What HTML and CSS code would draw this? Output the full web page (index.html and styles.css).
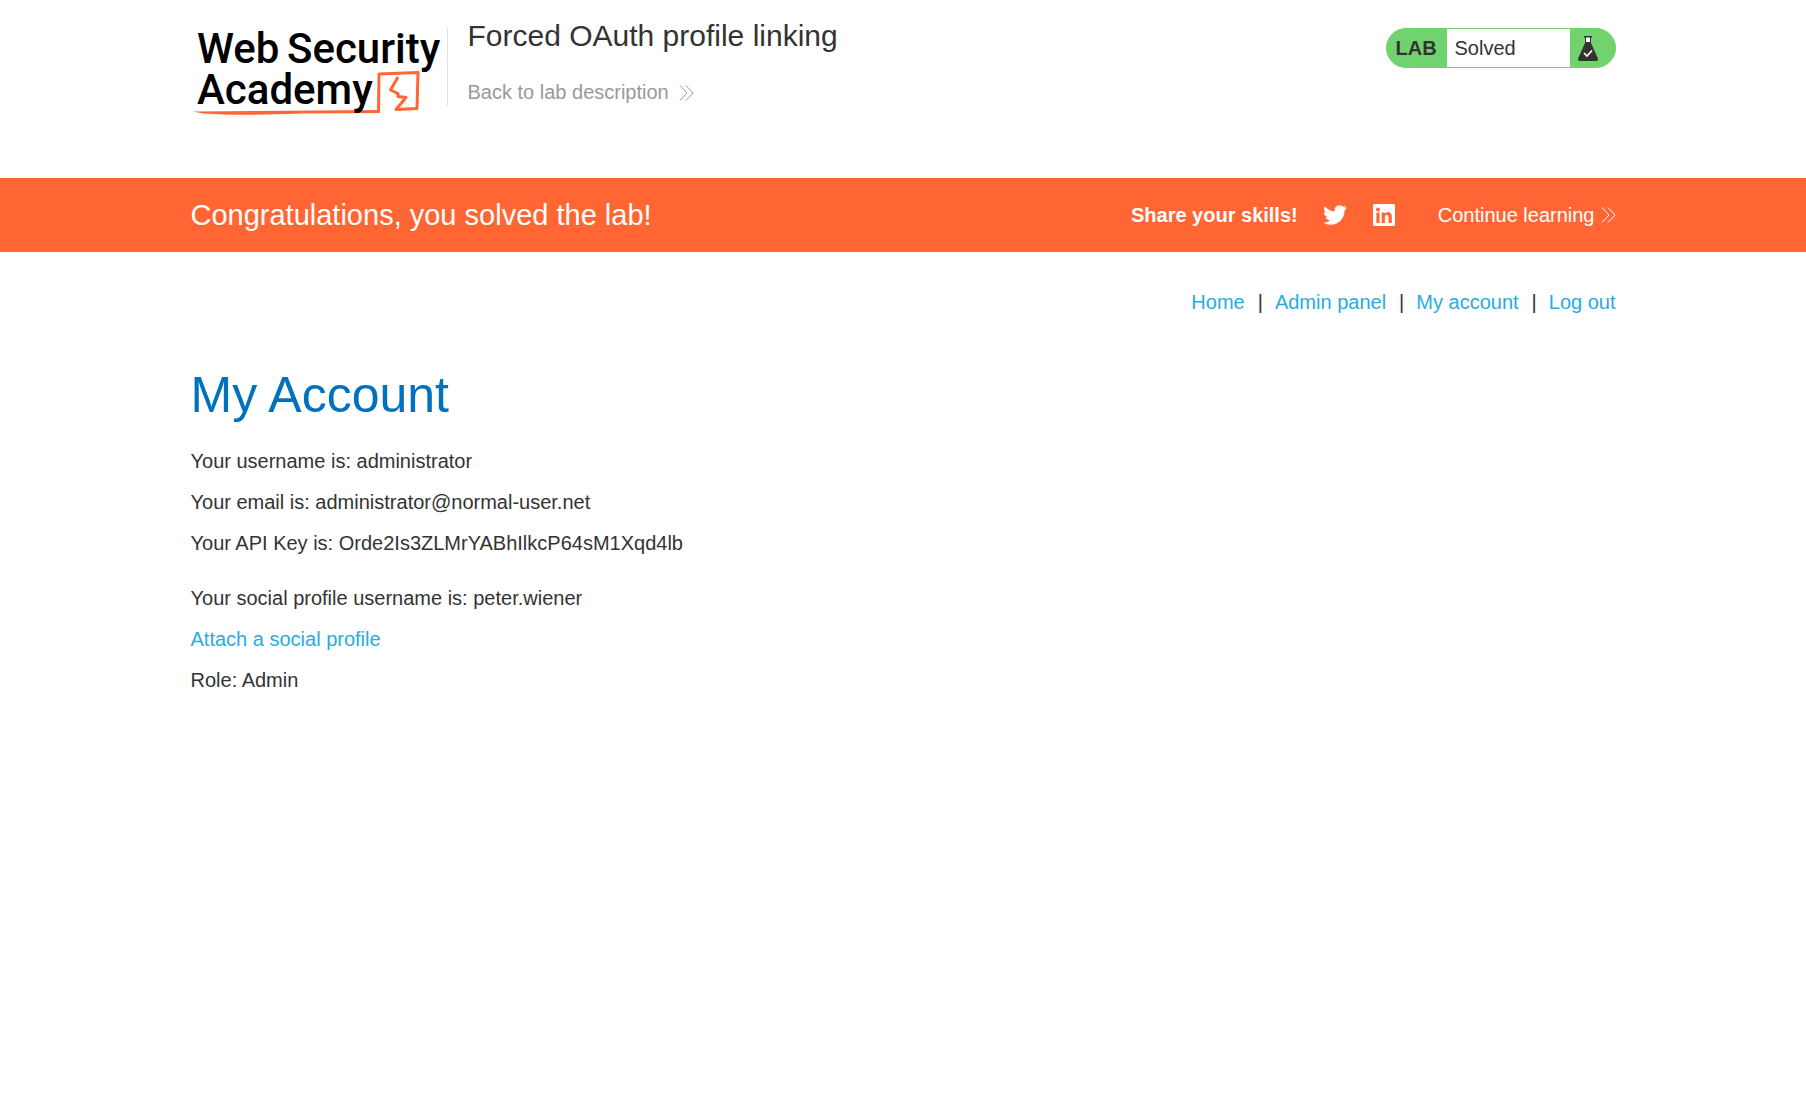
FILE: index.html
```
<!DOCTYPE html>
<html lang="en">
<head>
<meta charset="utf-8">
<meta name="viewport" content="width=device-width, initial-scale=1">
<title>Forced OAuth profile linking</title>
<link rel="stylesheet" href="styles.css">
</head>
<body>
<header class="lab-header container">
  <a class="logo" href="#" aria-label="Web Security Academy">
    <svg width="256" height="98" viewBox="0 0 256 98">
      <path fill="#ff6633" d="M2 91.500L188 90L189 93L110 93.500Q50 96 12 93.500Z"/>
      <path fill="none" stroke="#ff6633" stroke-width="3" stroke-linejoin="round" d="M187.500 92L188 54L227 52.500L226 88.500L205 89.500L215 77.500L207 76.500L207 73.500L199.500 70L207 57"/>
      <g class="logo-text">
        <text x="6" y="43">Web</text>
        <text x="96" y="43">Security</text>
        <text x="6" y="84">Academy</text>
      </g>
    </svg>
  </a>
  <div class="lab-title">
    <h2>Forced OAuth profile linking</h2>
    <a class="back" href="#">Back to lab description
      <svg class="chevrons" width="15" height="16" viewBox="0 0 15 16"><path d="M1 0.500L8 8L1 15.500M7 0.500L14 8L7 15.500"/></svg>
    </a>
  </div>
  <div class="status">
    <span class="status-tag">LAB</span>
    <span class="status-text">Solved</span>
    <span class="status-icon">
      <svg width="20" height="26" viewBox="0 0 20 26">
        <path fill="#fff" d="M7 1h6v6H7z"/>
        <path fill="#333332" d="M6 0h8v1.500h-1V7l6.500 14.500Q21 25 18 25H2Q-1 25 .5 21.500L7 7V1.500H6zM8 1.500V6h4V1.500z"/>
        <path fill="none" stroke="#fff" stroke-width="1.700" d="M6 17l3 3 5-5.500"/>
      </svg>
    </span>
  </div>
</header>
<section class="banner">
  <div class="banner-row container">
    <p class="congrats">Congratulations, you solved the lab!</p>
    <div class="share">
      <span class="share-label">Share your skills!</span>
      <a class="social" href="#" aria-label="Twitter">
        <svg width="24" height="24" viewBox="0 0 24 24"><path fill="#fff" d="M23.953 4.570a10 10 0 0 1-2.825.775 4.958 4.958 0 0 0 2.163-2.723c-.951.555-2.005.959-3.127 1.184a4.920 4.920 0 0 0-8.384 4.482C7.690 8.095 4.067 6.130 1.640 3.162a4.822 4.822 0 0 0-.666 2.475c0 1.710.870 3.213 2.188 4.096a4.904 4.904 0 0 1-2.228-.616v.060a4.923 4.923 0 0 0 3.946 4.827 4.996 4.996 0 0 1-2.212.085 4.936 4.936 0 0 0 4.604 3.417 9.867 9.867 0 0 1-6.102 2.105c-.390 0-.779-.023-1.170-.067a13.995 13.995 0 0 0 7.557 2.209c9.053 0 13.998-7.496 13.998-13.985 0-.210 0-.420-.015-.630A9.935 9.935 0 0 0 24 4.590z"/></svg>
      </a>
      <a class="social" href="#" aria-label="LinkedIn">
        <svg width="24" height="24" viewBox="0 0 24 24"><rect x="1" y="1" width="22" height="22" rx="1.500" fill="#fff"/><g fill="#ff6633"><circle cx="6" cy="6.500" r="1.900"/><path d="M4.400 9.500h3.200V20H4.400zM9.700 9.500h3v1.500c.7-1.100 1.800-1.700 3.200-1.700 3 0 3.900 1.900 3.900 4.600V20h-3.200v-5.400c0-1.500-.3-2.700-1.800-2.700s-1.900 1.200-1.900 2.600V20H9.700z"/></g></svg>
      </a>
      <a class="continue" href="#">Continue learning
        <svg class="chevrons" width="15" height="16" viewBox="0 0 15 16"><path d="M1 0.500L8 8L1 15.500M7 0.500L14 8L7 15.500"/></svg>
      </a>
    </div>
  </div>
</section>
<main class="container">
  <nav class="top-links">
    <a href="#">Home</a><span>|</span><a href="#">Admin panel</a><span>|</span><a href="#">My account</a><span>|</span><a href="#">Log out</a>
  </nav>
  <h1>My Account</h1>
  <div class="details">
    <p>Your username is: administrator</p>
    <p>Your email is: administrator@normal-user.net</p>
    <p>Your API Key is: Orde2Is3ZLMrYABhIlkcP64sM1Xqd4lb</p>
  </div>
  <div class="details">
    <p>Your social profile username is: peter.wiener</p>
    <p><a href="#">Attach a social profile</a></p>
    <p>Role: Admin</p>
  </div>
</main>
</body>
</html>
```
FILE: styles.css
```
* { box-sizing: border-box; }
body {
  margin: 0;
  background: #fff;
  color: #333332;
  font: 20px/25px "Liberation Sans", Arial, sans-serif;
}
h1, h2, p { margin: 0; font-weight: 400; }
a { color: #29abe2; text-decoration: none; }
svg { display: block; }
.container {
  width: 80%;
  max-width: 1425px;
  margin: 0 auto;
}
.lab-header {
  display: flex;
  align-items: flex-start;
  padding: 20px 0 60px;
}
.logo-text {
  font: 500 42px Roboto, sans-serif;
  fill: #000;
}
.lab-title {
  flex: 1;
  height: 78px;
  margin-top: 8px;
  padding-left: 20px;
  border-left: 1px solid #e0e0e0;
}
.lab-title h2 {
  margin-top: -10px;
  font-size: 30px;
  line-height: 36px;
}
.back {
  display: inline-flex;
  align-items: center;
  gap: 10px;
  margin-top: 26px;
  color: #999;
}
.chevrons {
  fill: none;
  stroke: currentColor;
  stroke-width: 1;
}
.status {
  display: flex;
  width: 230px;
  height: 40px;
  margin-top: 8px;
  overflow: hidden;
  border: 1px solid #70d36d;
  border-radius: 20px;
  background: #70d36d;
  line-height: 38px;
}
.status-tag {
  width: 60px;
  padding-left: 9px;
  font-weight: 700;
}
.status-text {
  flex: 1;
  padding-left: 8px;
  background: #fff;
}
.status-icon {
  width: 45px;
  padding: 7px 0 0 8px;
}
.banner {
  background: #ff6633;
  color: #fff;
}
.banner-row {
  display: flex;
  align-items: center;
  justify-content: space-between;
  min-height: 74px;
}
.congrats {
  font-size: 29px;
  line-height: 36px;
}
.share {
  display: flex;
  align-items: center;
}
.share-label {
  font-weight: 700;
}
.social { margin-left: 25px; }
.continue {
  display: flex;
  align-items: center;
  gap: 6px;
  margin-left: 42px;
  color: #fff;
}
.top-links {
  display: flex;
  justify-content: flex-end;
  padding-top: 38px;
}
.top-links span {
  margin: 0 12px 0 13px;
}
h1 {
  margin: 51px 0 25px;
  color: #0071bc;
  font-size: 50px;
  line-height: 58px;
}
.details {
  display: grid;
  gap: 16px;
  margin-bottom: 30px;
}
```
